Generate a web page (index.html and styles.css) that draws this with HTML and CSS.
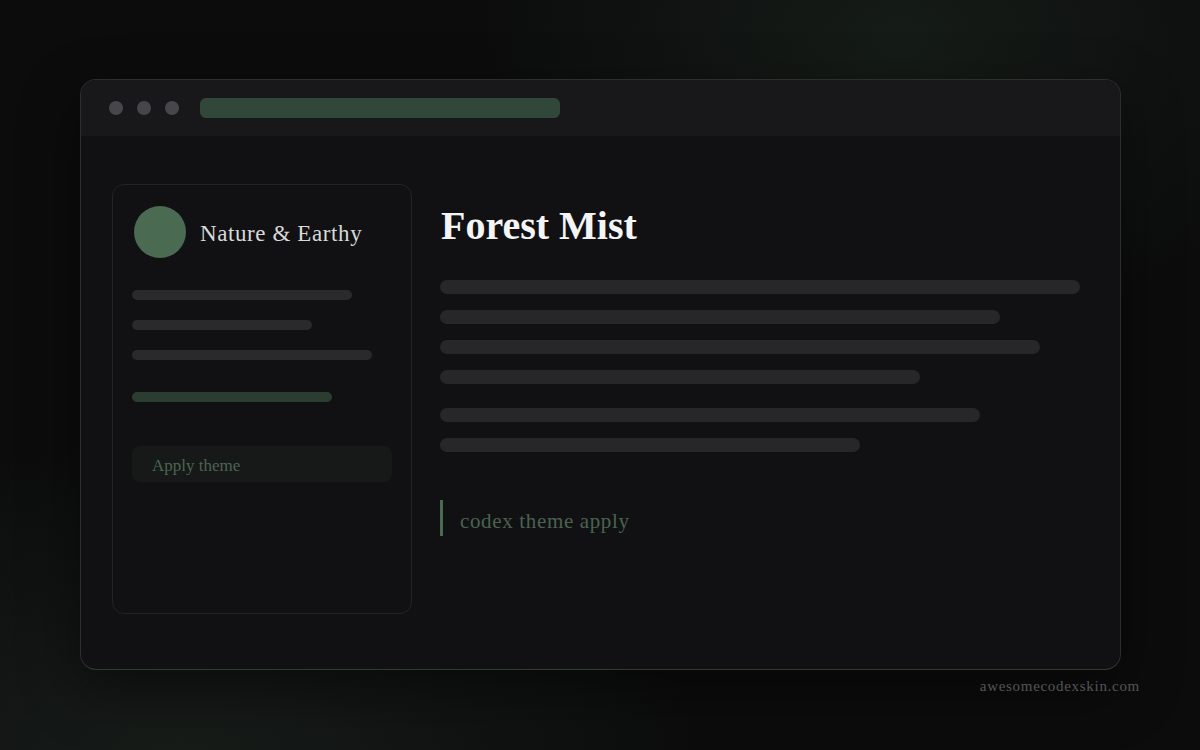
FILE: index.html
```html
<!DOCTYPE html>
<html lang="en">
<head>
<meta charset="utf-8">
<title>Forest Mist</title>
<link rel="stylesheet" href="styles.css">
</head>
<body>
<div class="stage">
  <div class="window">
    <div class="titlebar">
      <span class="dot"></span>
      <span class="dot"></span>
      <span class="dot"></span>
      <span class="urlbar"></span>
    </div>
    <div class="body">
      <aside class="card">
        <div class="card-head">
          <span class="swatch"></span>
          <span class="category">Nature &amp; Earthy</span>
        </div>
        <div class="card-lines">
          <span class="sline w220"></span>
          <span class="sline w180"></span>
          <span class="sline w240"></span>
        </div>
        <span class="sline green w200"></span>
        <div class="apply">Apply theme</div>
      </aside>
      <main class="main">
        <h1 class="title">Forest Mist</h1>
        <div class="lines">
          <span class="line w640"></span>
          <span class="line w560"></span>
          <span class="line w600"></span>
          <span class="line w480"></span>
        </div>
        <div class="lines second">
          <span class="line w540"></span>
          <span class="line w420"></span>
        </div>
        <div class="command">codex theme apply</div>
      </main>
    </div>
  </div>
  <div class="footer">awesomecodexskin.com</div>
</div>
</body>
</html>
```
FILE: styles.css
```css
* { box-sizing: border-box; }
html, body { margin: 0; padding: 0; }
body {
  width: 1200px;
  height: 750px;
  overflow: hidden;
  background-color: #0c0c0d;
  background-image:
    radial-gradient(ellipse 420px 300px at 900px 40px, rgba(38, 56, 42, 0.35), rgba(0,0,0,0) 100%),
    radial-gradient(ellipse 520px 320px at 180px 760px, rgba(36, 48, 40, 0.45), rgba(0,0,0,0) 100%);
  font-family: "Liberation Serif", serif;
}
.stage {
  padding: 79px 0 0 80px;
}
.window {
  width: 1041px;
  height: 591px;
  border: 1px solid #2c2f2d;
  border-bottom-color: #323a34;
  border-radius: 16px;
  background: #111113;
  overflow: hidden;
  box-shadow: 0 20px 60px rgba(0,0,0,0.45);
}
.titlebar {
  height: 56px;
  background: #18181a;
  display: flex;
  align-items: center;
  gap: 14px;
  padding-left: 28px;
  padding-bottom: 1px;
}
.dot {
  width: 14px;
  height: 14px;
  border-radius: 50%;
  background: #47474b;
}
.urlbar {
  width: 360px;
  height: 20px;
  border-radius: 6px;
  background: #31473a;
  margin-left: 7px;
}
.body {
  display: flex;
  gap: 28px;
  padding: 48px 0 0 31px;
}
.card {
  width: 300px;
  height: 430px;
  border: 1px solid #232325;
  border-radius: 12px;
  padding: 19px;
  display: flex;
  flex-direction: column;
}
.card-head {
  display: flex;
  align-items: center;
  height: 56px;
  gap: 14px;
}
.swatch {
  width: 52px;
  height: 52px;
  border-radius: 50%;
  background: #4a6b52;
  margin-left: 2px;
  flex: none;
}
.category {
  font-size: 23px;
  letter-spacing: 0.6px;
  color: #d9d9d9;
  margin-top: 4px;
}
.card-lines {
  display: flex;
  flex-direction: column;
  gap: 20px;
  margin-top: 30px;
}
.sline {
  display: block;
  height: 10px;
  border-radius: 5px;
  background: #2a2a2d;
}
.sline.green {
  background: #2b3d31;
  margin-top: 32px;
}
.w180 { width: 180px; }
.w200 { width: 200px; }
.w220 { width: 220px; }
.w240 { width: 240px; }
.apply {
  margin-top: 44px;
  height: 36px;
  border-radius: 8px;
  background: #161917;
  color: #4d6452;
  font-size: 17px;
  line-height: 40px;
  padding-left: 20px;
}
.main {
  width: 640px;
  padding-top: 22px;
}
.title {
  margin: 0 0 34px 1px;
  font-size: 40px;
  line-height: 40px;
  font-weight: bold;
  color: #f4f4f4;
}
.lines {
  display: flex;
  flex-direction: column;
  gap: 16px;
}
.lines.second { margin-top: 24px; }
.line {
  display: block;
  height: 14px;
  border-radius: 7px;
  background: #27272a;
}
.w420 { width: 420px; }
.w480 { width: 480px; }
.w540 { width: 540px; }
.w560 { width: 560px; }
.w600 { width: 600px; }
.w640 { width: 640px; }
.command {
  margin-top: 48px;
  height: 36px;
  border-left: 3px solid #4a6b52;
  padding-left: 17px;
  font-size: 21px;
  letter-spacing: 0.65px;
  line-height: 42px;
  color: #4b6251;
}
.footer {
  width: 1060px;
  text-align: right;
  margin-top: 6px;
  font-size: 15px;
  letter-spacing: 0.7px;
  color: #555557;
  line-height: 20px;
}
```
